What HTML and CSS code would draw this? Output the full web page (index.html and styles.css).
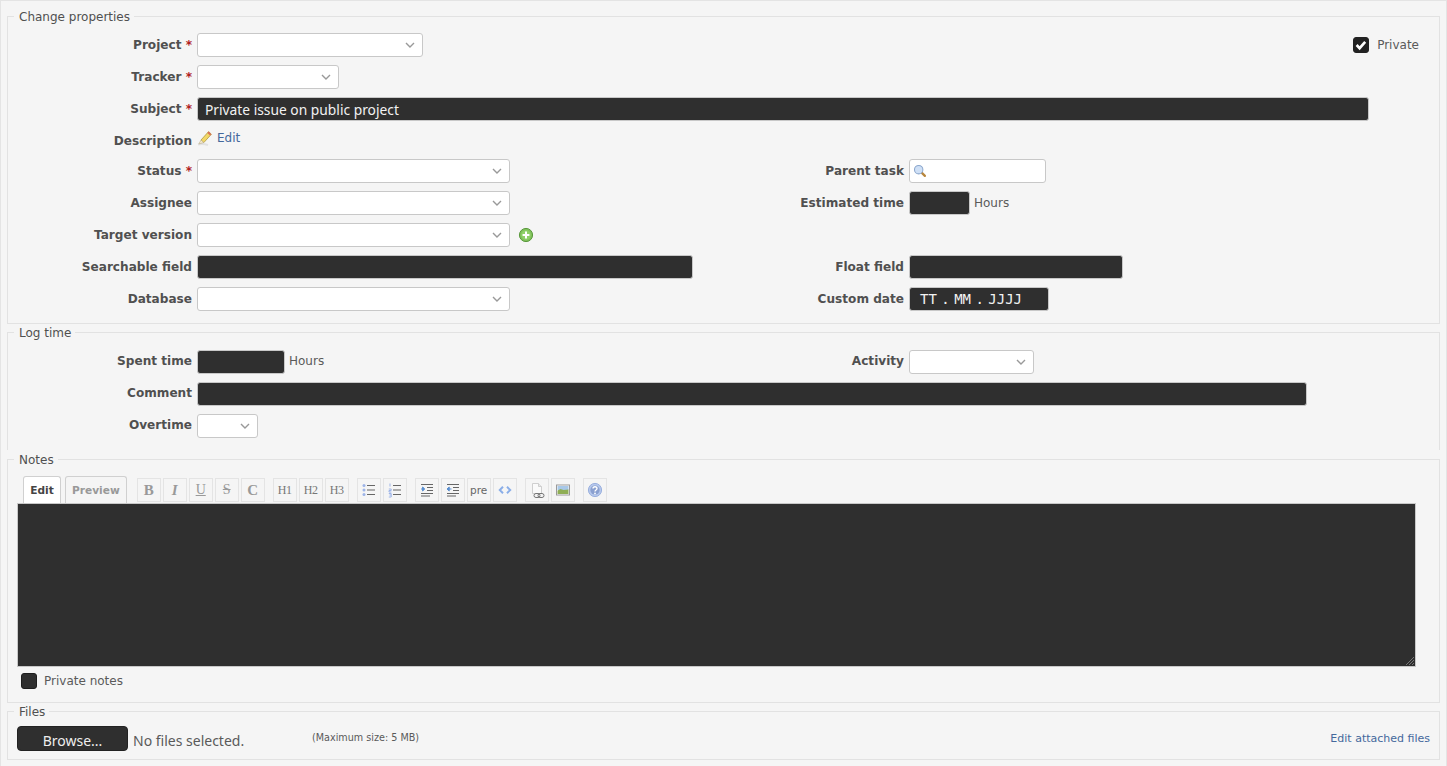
FILE: index.html
```html
<!DOCTYPE html>
<html lang="en">

<head>
    <meta charset="UTF-8" />
    <title>Issue form</title>
    <link rel="stylesheet" href="styles.css">
</head>

<body>
    <div class="box">
        <fieldset class="props">
            <legend>Change properties</legend>

            <div class="row">
                <label class="lbl">Project <span class="req">*</span></label>
                <select class="sel w-226"></select>
                <div class="private">
                    <span class="check checked">
                        <svg viewBox="0 0 16 16" width="16" height="16"><path d="M3.6 8l3 3.2 5.6-6.4" fill="none" stroke="#fff" stroke-width="2.6"/></svg>
                    </span>
                    <span>Private</span>
                </div>
            </div>
            <div class="row">
                <label class="lbl">Tracker <span class="req">*</span></label>
                <select class="sel w-142"></select>
            </div>
            <div class="row">
                <label class="lbl">Subject <span class="req">*</span></label>
                <div class="dark subject">Private issue on public project</div>
            </div>
            <div class="row row-desc">
                <label class="lbl">Description</label>
                <div class="edit-link">
                    <svg viewBox="0 0 16 16" width="16" height="16">
                        <path d="M1 14.500c3-.6 7-.4 10 .5" stroke="#e2e2e2" stroke-width="2" fill="none"/>
                        <path d="M4 10L11.600 1.600l2.800 2.600L6.800 12.600z" fill="#f2d868" stroke="#b09a40" stroke-width=".8"/>
                        <path d="M11.600 1.600l2.800 2.600-1.300 1.400-2.800-2.600z" fill="#d9705a"/>
                        <path d="M1.800 14l2.200-4 2.800 2.600z" fill="#f5ead0" stroke="#b0a078" stroke-width=".5"/>
                    </svg>
                    <a href="#">Edit</a>
                </div>
            </div>

            <div class="split">
                <div class="col">
                    <div class="row">
                        <label class="lbl">Status <span class="req">*</span></label>
                        <select class="sel w-313"></select>
                    </div>
                    <div class="row">
                        <label class="lbl">Assignee</label>
                        <select class="sel w-313"></select>
                    </div>
                    <div class="row">
                        <label class="lbl">Target version</label>
                        <select class="sel w-313"></select>
                        <svg class="add" viewBox="0 0 16 16" width="16" height="16">
                            <circle cx="8" cy="8" r="6.600" fill="#7fc05a" stroke="#5b9a3e"/>
                            <circle cx="8" cy="8" r="4.800" fill="#8fd069"/>
                            <path d="M8 4.600v6.800M4.600 8h6.800" stroke="#fff" stroke-width="2"/>
                        </svg>
                    </div>
                    <div class="row">
                        <label class="lbl">Searchable field</label>
                        <div class="dark w-496"></div>
                    </div>
                    <div class="row">
                        <label class="lbl">Database</label>
                        <select class="sel w-313"></select>
                    </div>
                </div>
                <div class="col">
                    <div class="row">
                        <label class="lbl">Parent task</label>
                        <div class="search">
                            <svg viewBox="0 0 16 16" width="14" height="14">
                                <path d="M9.600 9.600l4 4" stroke="#b8863c" stroke-width="2.600" stroke-linecap="round"/>
                                <circle cx="6.500" cy="6.500" r="4.800" fill="#cfe0f6" stroke="#8aa6cc" stroke-width="1.200"/>
                            </svg>
                        </div>
                    </div>
                    <div class="row">
                        <label class="lbl">Estimated time</label>
                        <div class="dark w-61"></div>
                        <span class="unit">Hours</span>
                    </div>
                    <div class="row"></div>
                    <div class="row">
                        <label class="lbl">Float field</label>
                        <div class="dark w-214"></div>
                    </div>
                    <div class="row">
                        <label class="lbl">Custom date</label>
                        <div class="dark date">TT . MM . JJJJ</div>
                    </div>
                </div>
            </div>
        </fieldset>

        <fieldset class="log">
            <legend>Log time</legend>
            <div class="split">
                <div class="col">
                    <div class="row">
                        <label class="lbl">Spent time</label>
                        <div class="dark w-88"></div>
                        <span class="unit">Hours</span>
                    </div>
                </div>
                <div class="col">
                    <div class="row">
                        <label class="lbl">Activity</label>
                        <select class="sel w-125"></select>
                    </div>
                </div>
            </div>
            <div class="row">
                <label class="lbl">Comment</label>
                <div class="dark w-1110"></div>
            </div>
            <div class="row">
                <label class="lbl">Overtime</label>
                <select class="sel w-61"></select>
            </div>
        </fieldset>

        <fieldset class="notes">
            <legend>Notes</legend>
            <div class="tabbar">
                <a class="tab active" href="#">Edit</a>
                <a class="tab" href="#">Preview</a>
                <div class="tools">
                    <span class="tool t-serif">B</span>
                    <span class="tool t-serif t-i">I</span>
                    <span class="tool t-thin t-u">U</span>
                    <span class="tool t-thin t-s">S</span>
                    <span class="tool t-serif">C</span>
                    <span class="tool t-h gap">H1</span>
                    <span class="tool t-h">H2</span>
                    <span class="tool t-h">H3</span>
                    <span class="tool gap">
                        <svg viewBox="0 0 16 16" width="16" height="16">
                            <path d="M6 3.500h8M6 8h8M6 12.500h8" stroke="#666" stroke-width="1.200"/>
                            <circle cx="3" cy="3.500" r="1.500" fill="#9db4e8"/>
                            <circle cx="3" cy="8" r="1.500" fill="#9db4e8"/>
                            <circle cx="3" cy="12.500" r="1.500" fill="#9db4e8"/>
                        </svg>
                    </span>
                    <span class="tool">
                        <svg viewBox="0 0 16 16" width="16" height="16">
                            <path d="M6 3.500h8M6 8h8M6 12.500h8" stroke="#666" stroke-width="1.200"/>
                            <path d="M3 1.500v3M1.800 7h2.400v1.500H2v1.500h2.400M1.800 11.500h2.400v3.500H1.800M2.400 13h1.800" stroke="#9db4e8" fill="none"/>
                        </svg>
                    </span>
                    <span class="tool gap">
                        <svg viewBox="0 0 16 16" width="16" height="16">
                            <path d="M2 2.500h12M8 5.500h6M8 8.500h6M2 11.500h12M2 14h9" stroke="#666" stroke-width="1.200"/>
                            <path d="M2 7h3M3.600 5l2.200 2-2.200 2z" stroke="#5a8fd0" fill="#5a8fd0"/>
                        </svg>
                    </span>
                    <span class="tool">
                        <svg viewBox="0 0 16 16" width="16" height="16">
                            <path d="M2 2.500h12M8 5.500h6M8 8.500h6M2 11.500h12M2 14h9" stroke="#666" stroke-width="1.200"/>
                            <path d="M3.500 7h3M4.200 5L2 7l2.200 2z" stroke="#5a8fd0" fill="#5a8fd0"/>
                        </svg>
                    </span>
                    <span class="tool t-pre">pre</span>
                    <span class="tool">
                        <svg viewBox="0 0 16 16" width="16" height="16">
                            <path d="M6 4.800L2.800 8 6 11.200M10 4.800L13.200 8 10 11.200" fill="none" stroke="#8aaee8" stroke-width="2"/>
                        </svg>
                    </span>
                    <span class="tool gap">
                        <svg viewBox="0 0 20 20" width="20" height="20">
                            <path d="M5.500 3.500h6l3 3v7h-9z" fill="#fafafa" stroke="#cfcfcf"/>
                            <path d="M11.500 3.500v3h3" fill="#e8e8e8" stroke="#cfcfcf"/>
                            <rect x="7" y="13.500" width="6" height="4" rx="2" fill="none" stroke="#777"/>
                            <rect x="11" y="13.500" width="6" height="4" rx="2" fill="none" stroke="#777"/>
                        </svg>
                    </span>
                    <span class="tool">
                        <svg viewBox="0 0 16 16" width="16" height="16">
                            <rect x="1.500" y="3" width="13" height="10" fill="#fff" stroke="#999"/>
                            <rect x="2.500" y="4" width="11" height="4" fill="#a8c8e8"/>
                            <path d="M2.500 12V8.500l3-1.500 3 1 5-.5V12z" fill="#8fae55"/>
                        </svg>
                    </span>
                    <span class="tool gap">
                        <svg viewBox="0 0 16 16" width="16" height="16">
                            <circle cx="8" cy="8" r="6.600" fill="#b6c8ec" stroke="#9ab0de"/>
                            <circle cx="8" cy="8" r="4.600" fill="#8aa0d0"/>
                            <path d="M6 6.600c0-2.400 4-2.400 4 0 0 1.500-2 1.400-2 3" fill="none" stroke="#fff" stroke-width="1.400"/>
                            <circle cx="8" cy="11.400" r=".9" fill="#fff"/>
                        </svg>
                    </span>
                </div>
            </div>
            <div class="dark editor">
                <svg class="grip" viewBox="0 0 10 10" width="10" height="10"><path d="M9 1L1 9M9 4L4 9M9 7L7 9" stroke="#777"/></svg>
            </div>
            <div class="private-notes">
                <span class="check"></span>
                <span>Private notes</span>
            </div>
        </fieldset>

        <fieldset class="files">
            <legend>Files</legend>
            <div class="file-row">
                <button class="browse" type="button">Browse...</button>
                <span class="no-files">No files selected.</span>
                <span class="max-size">(Maximum size: 5 MB)</span>
                <a class="edit-files" href="#">Edit attached files</a>
            </div>
        </fieldset>
    </div>
</body>

</html>
```
FILE: styles.css
```css
* {
    box-sizing: border-box;
}

html,
body {
    margin: 0;
    height: 100%;
    overflow: hidden;
}

body {
    background-color: #f5f5f5;
    color: #5a5a5a;
    font-family: "DejaVu Sans", sans-serif;
    font-size: 12px;
}

a {
    color: #44689c;
    text-decoration: none;
}

.box {
    height: 766px;
    border: 1px solid #e4e4e4;
    border-bottom: 0;
    padding: 5px 6px 0 6px;
    overflow: hidden;
}

fieldset {
    margin: 0;
    padding: 0;
    min-width: 0;
    border: 1px solid #e2e2e2;
}

legend {
    margin-left: 6px;
    padding: 2px 4px 0 5px;
    font-size: 12px;
    line-height: 18px;
    color: #505050;
}

.props {
    height: 318px;
    padding-top: 3px;
}

.log {
    height: 128px;
    margin-top: -2px;
    padding-top: 4px;
    border-bottom: 0;
    overflow: hidden;
}

.log .lbl,
.log .unit {
    margin-bottom: 2px;
}

.notes {
    height: 254px;
    margin-top: -1px;
    padding-top: 7px;
}

.files {
    height: 59px;
    margin-top: -2px;
}

.row {
    display: flex;
    align-items: center;
    height: 32px;
}

.row-desc {
    height: 30px;
}

.row-desc .lbl {
    padding-top: 2px;
}

.split {
    display: grid;
    grid-template-columns: 712px 1fr;
}

.lbl {
    width: 184px;
    margin-right: 5px;
    text-align: right;
    font-size: 12.1px;
    font-weight: bold;
    color: #505050;
    white-space: nowrap;
}

.req {
    color: #b02020;
}

.sel,
.dark,
.search {
    height: 24px;
    border: 1px solid #c8c8c8;
    border-radius: 3px;
}

.sel {
    appearance: none;
    background: #fff url("data:image/svg+xml,%3Csvg xmlns='http://www.w3.org/2000/svg' width='10' height='6'%3E%3Cpath d='M1 1l4 4 4-4' fill='none' stroke='%23999' stroke-width='1.4'/%3E%3C/svg%3E") no-repeat right 7px center;
}

.dark {
    background-color: #2f2f2f;
    color: #f2f2f2;
}

.w-61 { width: 61px; }
.w-88 { width: 88px; }
.w-125 { width: 125px; }
.w-142 { width: 142px; }
.w-214 { width: 214px; }
.w-226 { width: 226px; }
.w-313 { width: 313px; }
.w-496 { width: 496px; }
.w-1110 { width: 1110px; }

.subject {
    width: 1172px;
    padding: 1px 7px;
    font-family: "Noto Sans", sans-serif;
    font-size: 13.8px;
    line-height: 21px;
}

.date {
    width: 140px;
    padding-left: 10px;
    font-family: "DejaVu Sans Mono", monospace;
    font-size: 14px;
    word-spacing: -4px;
    line-height: 22px;
}

.private {
    display: flex;
    align-items: center;
    gap: 8px;
    margin-left: auto;
    margin-right: 20px;
}

.check {
    display: block;
    width: 16px;
    height: 16px;
    background-color: #2f2f2f;
    border: 1px solid #1e1e1e;
    border-radius: 3px;
}

.check.checked {
    background-color: #222;
    border-color: #222;
}

.check svg {
    display: block;
    margin: -1px;
}

.edit-link {
    display: flex;
    align-items: center;
    gap: 4px;
    margin-top: -5px;
}

.search {
    display: flex;
    align-items: center;
    width: 137px;
    padding-left: 3px;
    background-color: #fff;
}

.add {
    margin-left: 8px;
}

.unit {
    margin-left: 4px;
}

.tabbar {
    display: flex;
    align-items: flex-end;
    height: 27px;
    padding-left: 15px;
}

.tab {
    display: block;
    height: 27px;
    min-width: 38px;
    margin-right: 4px;
    padding: 0 6px;
    border: 1px solid #d0d0d0;
    border-bottom: 0;
    border-radius: 3px 3px 0 0;
    font-size: 10.6px;
    font-weight: bold;
    line-height: 27px;
    text-align: center;
    color: #999;
}

.tab.active {
    background-color: #fff;
    color: #444;
}

.tools {
    display: flex;
    gap: 2px;
    margin-left: 6px;
    margin-bottom: 1px;
}

.tool {
    display: flex;
    align-items: center;
    justify-content: center;
    width: 24px;
    height: 24px;
    border: 1px solid #e4e4e4;
    color: #999;
    font-size: 13px;
}

.tool.gap {
    margin-left: 6px;
}

.t-serif {
    font-family: "Liberation Serif", serif;
    font-size: 15px;
    font-weight: bold;
}

.t-i {
    font-style: italic;
}

.t-thin {
    font-family: "Liberation Serif", serif;
    font-size: 14px;
}

.t-u {
    text-decoration: underline;
}

.t-s {
    text-decoration: line-through;
}

.t-h {
    font-family: "Liberation Serif", serif;
    font-size: 12px;
    letter-spacing: -0.5px;
    color: #777;
}

.t-pre {
    font-size: 10.5px;
    color: #666;
}

.editor {
    position: relative;
    height: 164px;
    width: 1399px;
    margin-left: 9px;
    border-radius: 0;
}

.grip {
    position: absolute;
    right: 0;
    bottom: 0;
}

.private-notes {
    display: flex;
    align-items: center;
    gap: 7px;
    margin: 6px 0 0 13px;
}

.file-row {
    display: flex;
    align-items: center;
    height: 25px;
    margin-top: 5px;
    padding-left: 9px;
    padding-right: 9px;
}

.browse {
    width: 111px;
    height: 25px;
    padding: 4px 0 0;
    background-color: #2f2f2f;
    border: 1px solid #222;
    border-radius: 4px;
    color: #eee;
    font-family: "Noto Sans", sans-serif;
    font-size: 14px;
}

.no-files {
    width: 179px;
    margin-left: 5px;
    padding-top: 4px;
    font-family: "Noto Sans", sans-serif;
    font-size: 14px;
}

.max-size {
    font-size: 9.65px;
    margin-top: -2px;
}

.edit-files {
    margin-left: auto;
    font-size: 11px;
}
```
